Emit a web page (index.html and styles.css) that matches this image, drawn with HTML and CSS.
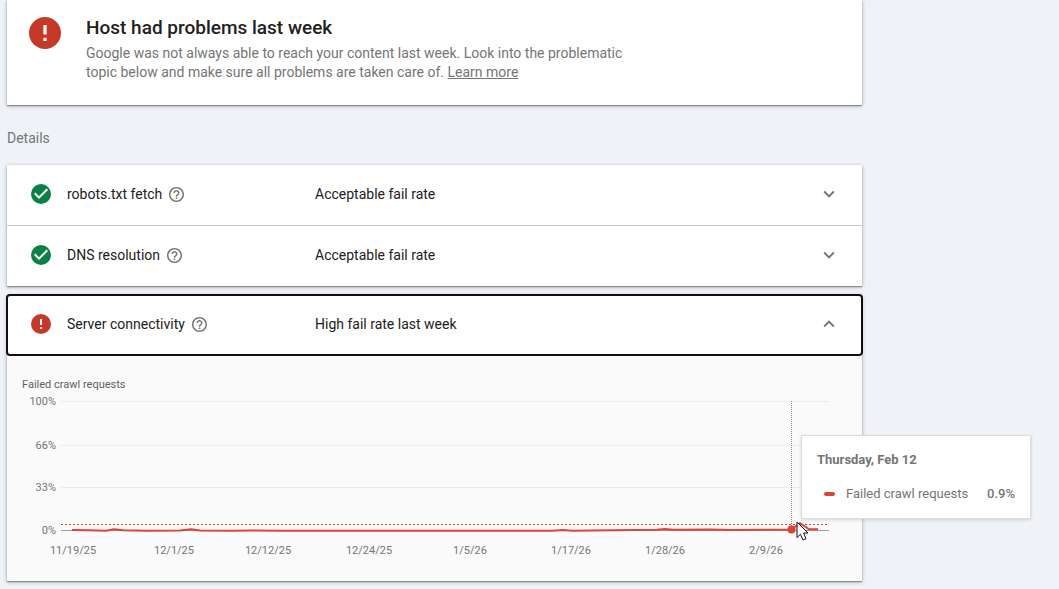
FILE: index.html
```html
<!DOCTYPE html>
<html lang="en">
<head>
<meta charset="utf-8">
<title>Host status</title>
<link rel="stylesheet" href="styles.css">
</head>
<body>
<svg class="defs" aria-hidden="true">
  <symbol id="error" viewBox="2 2 20 20"><circle cx="12" cy="12" r="10" fill="#c53929"/><path d="M11 7h2v6h-2zM11 15h2v2h-2z" fill="#fff"/></symbol>
  <symbol id="check" viewBox="2 2 20 20"><circle cx="12" cy="12" r="10" fill="#0b8043"/><path d="M10 17l-5-5 1.4-1.4 3.6 3.6 7.6-7.6L19 8z" fill="#fff"/></symbol>
  <symbol id="help" viewBox="2 2 20 20"><path d="M11 18h2v-2h-2v2zm1-16C6.48 2 2 6.48 2 12s4.48 10 10 10 10-4.48 10-10S17.52 2 12 2zm0 18c-4.41 0-8-3.59-8-8s3.59-8 8-8 8 3.59 8 8-3.59 8-8 8zm0-14c-2.21 0-4 1.79-4 4h2c0-1.1.9-2 2-2s2 .9 2 2c0 2-3 1.75-3 5h2c0-2.25 3-2.5 3-5 0-2.21-1.79-4-4-4z" fill="#757575"/></symbol>
  <symbol id="down" viewBox="0 0 24 24"><path d="M7.41 8.59L12 13.17l4.59-4.58L18 10l-6 6-6-6z" fill="#757575"/></symbol>
  <symbol id="up" viewBox="0 0 24 24"><path d="M12 8l-6 6 1.41 1.41L12 10.83l4.59 4.58L18 14z" fill="#757575"/></symbol>
</svg>
<main class="page">
  <section class="card summary">
    <svg class="summary-icon" aria-hidden="true"><use href="#error"/></svg>
    <div class="summary-text">
      <h1>Host had problems last week</h1>
      <p>Google was not always able to reach your content last week. Look into the problematic topic below and make sure all problems are taken care of. <a href="#">Learn more</a></p>
    </div>
  </section>

  <h2 class="label">Details</h2>

  <section class="card">
    <button class="row" type="button" aria-expanded="false">
      <svg class="status" aria-hidden="true"><use href="#check"/></svg>
      <span class="name">robots.txt fetch <svg class="help" aria-hidden="true"><use href="#help"/></svg></span>
      <span class="result">Acceptable fail rate</span>
      <svg class="chevron" aria-hidden="true"><use href="#down"/></svg>
    </button>
    <button class="row" type="button" aria-expanded="false">
      <svg class="status" aria-hidden="true"><use href="#check"/></svg>
      <span class="name">DNS resolution <svg class="help" aria-hidden="true"><use href="#help"/></svg></span>
      <span class="result">Acceptable fail rate</span>
      <svg class="chevron" aria-hidden="true"><use href="#down"/></svg>
    </button>
  </section>

  <section class="card expanded">
    <button class="row focused" type="button" aria-expanded="true">
      <svg class="status" aria-hidden="true"><use href="#error"/></svg>
      <span class="name">Server connectivity <svg class="help" aria-hidden="true"><use href="#help"/></svg></span>
      <span class="result">High fail rate last week</span>
      <svg class="chevron" aria-hidden="true"><use href="#up"/></svg>
    </button>
    <div class="panel">
      <h3>Failed crawl requests</h3>
      <div class="chart">
        <svg class="plot" viewBox="0 0 855 188" role="img" aria-label="Failed crawl requests over time">
          <path class="grid" d="M54 8.5H822M54 52.5H822M54 94.5H822"/>
          <path class="axis" d="M54 137.5H822"/>
          <path class="threshold" d="M54 131.5H822"/>
          <path class="series" d="M65 137L82 137.2L99 137.7L107 136.2L116 137.2L141 137.8L173 137.5L184 136.2L193 137.5L226 137.7L243 137.4L275 137.7L500 137.7L545 137.7L556 137L566 137.7L605 137.3L650 136.7L658 135.9L666 136.7L702 136.5L725 137L784.5 136.5L793 130L802 136.2L811 136.2"/>
          <path class="guide" d="M784.5 8V136"/>
          <circle class="point" cx="784.5" cy="136.5" r="4"/>
          <g class="tick end">
            <text x="49" y="12">100%</text><text x="49" y="56">66%</text><text x="49" y="98">33%</text><text x="49" y="141">0%</text>
          </g>
          <g class="tick middle">
            <text x="66" y="161">11/19/25</text><text x="167" y="161">12/1/25</text><text x="261" y="161">12/12/25</text><text x="362" y="161">12/24/25</text><text x="463" y="161">1/5/26</text><text x="564" y="161">1/17/26</text><text x="658" y="161">1/28/26</text><text x="759" y="161">2/9/26</text>
          </g>
        </svg>
        <div class="tooltip" role="tooltip">
          <strong>Thursday, Feb 12</strong>
          <div class="entry"><span class="swatch"></span><span>Failed crawl requests</span><b>0.9%</b></div>
        </div>
        <svg class="cursor" viewBox="0 0 13 20" aria-hidden="true"><path d="M1 1V16.5L4.5 13.3L7 19L10 17.7L7.6 12H12Z" fill="#fff" stroke="#111122" stroke-width="1"/></svg>
      </div>
    </div>
  </section>
</main>
</body>
</html>
```
FILE: styles.css
```css
* { box-sizing: border-box; }
body { margin: 0; background: #eff3f8; color: #212121; font: 14px/19px Roboto, sans-serif; }
h1, h2, h3, p { margin: 0; }
.defs { display: none; }
.page { padding: 0 197px 7px 7px; }
.card { background: #fff; box-shadow: 0 1px 1px rgba(0,0,0,.3), 0 1px 4px rgba(0,0,0,.3); }

.summary { display: flex; gap: 25px; padding: 17px 22px 23px; }
.summary-icon { flex: none; width: 32px; height: 32px; }
.summary-text { max-width: 560px; }
.summary h1 { font-size: 19px; line-height: 22px; font-weight: 500; margin-bottom: 5px; }
.summary p { color: #757575; }
.summary a { color: inherit; }

.label { margin: 24px 0 17px; font-size: 14px; font-weight: 400; color: #757575; }

.row { display: flex; align-items: center; width: 100%; height: 60px; padding: 0 22px 2px 24px; border: 0; background: #fff; color: inherit; font: inherit; text-align: left; }
.row + .row { height: 61px; border-top: 1px solid #ccc; }
.status { flex: none; width: 20px; height: 20px; margin-right: 16px; }
.name { display: flex; align-items: center; gap: 7px; width: 248px; }
.help { width: 15px; height: 15px; }
.result { flex: 1; }
.chevron { width: 22px; height: 22px; }

.expanded { margin-top: 9px; background: #fafafa; }
.row.focused { outline: 2px solid #101010; outline-offset: -1px; border-radius: 3px; }
.panel { padding-top: 22px; }
.panel h3 { padding-left: 15px; font-size: 11px; line-height: 16px; font-weight: 400; color: #616161; }
.chart { position: relative; }
.plot { display: block; width: 100%; }
.grid { stroke: #ececec; }
.axis { stroke: #9e9e9e; }
.threshold { stroke: #db4437; stroke-dasharray: 2 2; }
.series { fill: none; stroke: #db4437; stroke-width: 2; stroke-linejoin: round; }
.guide { stroke: #8a8a8a; stroke-dasharray: 1 1; }
.point { fill: #db4437; }
.tick { font-size: 11px; fill: #757575; }
.end { text-anchor: end; }
.middle { text-anchor: middle; }

.tooltip { position: absolute; left: 794px; top: 42px; width: 230px; padding: 15px; border: 1px solid #ddd; background: rgba(255,255,255,.97); box-shadow: 0 1px 3px rgba(0,0,0,.15); color: #757575; font-size: 13px; line-height: 18px; }
.tooltip strong, .tooltip b { font-weight: 500; }
.tooltip strong { display: block; font-weight: 700; }
.entry { display: flex; align-items: center; margin-top: 16px; }
.entry b { margin-left: auto; }
.swatch { width: 11px; height: 4px; margin: 0 11px 0 7px; border-radius: 2px; background: #db4437; }
.cursor { position: absolute; left: 789px; top: 128px; width: 13px; height: 20px; }
```
